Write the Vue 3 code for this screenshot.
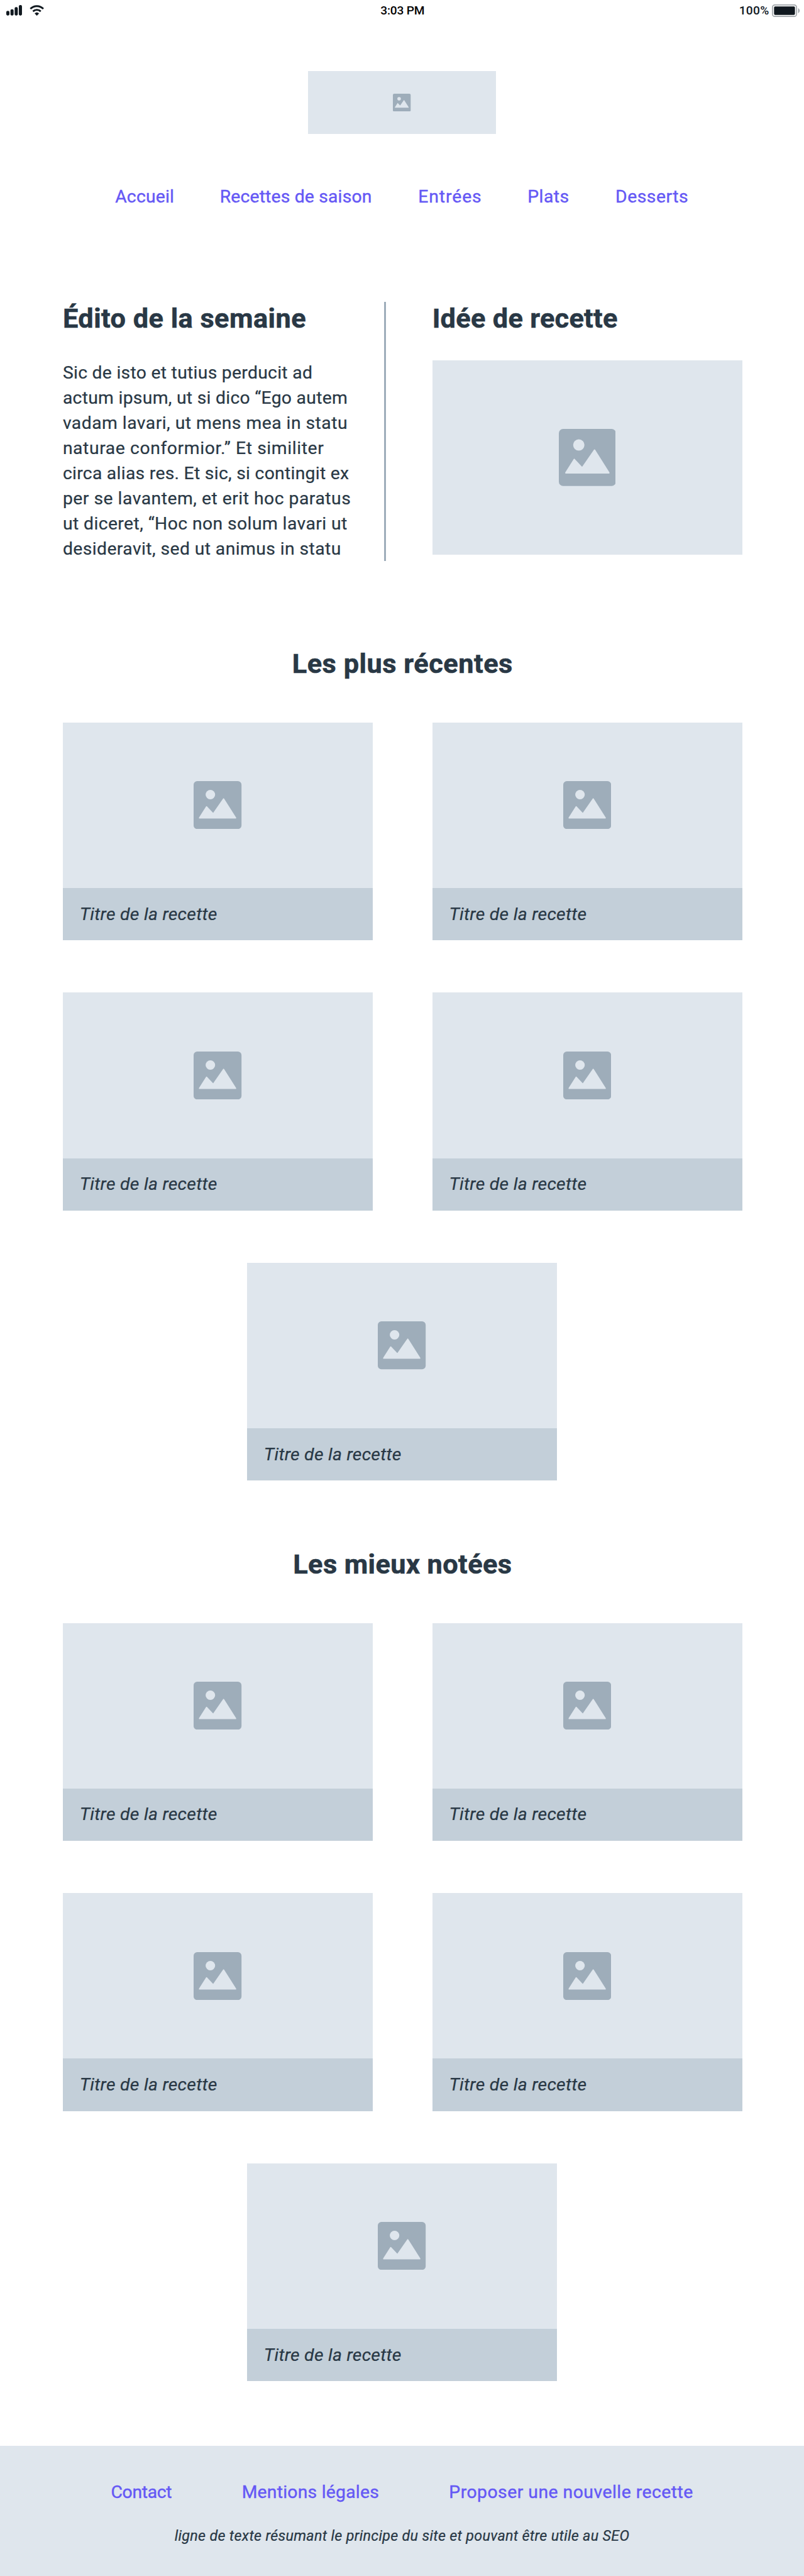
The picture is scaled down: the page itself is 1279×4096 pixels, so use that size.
<script setup>
import { h } from 'vue'

const navLinks = [
  { label: 'Accueil', cls: 'accueil' },
  { label: 'Recettes de saison', cls: 'saison' },
  { label: 'Entrées', cls: 'entrees' },
  { label: 'Plats', cls: 'plats' },
  { label: 'Desserts', cls: 'desserts' },
]

const editoLines = [
  'Sic de isto et tutius perducit ad',
  'actum ipsum, ut si dico “Ego autem',
  'vadam lavari, ut mens mea in statu',
  'naturae conformior.” Et similiter',
  'circa alias res. Et sic, si contingit ex',
  'per se lavantem, et erit hoc paratus',
  'ut diceret, “Hoc non solum lavari ut',
  'desideravit, sed ut animus in statu',
]

const sections = [
  { title: 'Les plus récentes', cls: 'recentes' },
  { title: 'Les mieux notées', cls: 'notees' },
]
const recipes = Array.from({ length: 5 }, () => 'Titre de la recette')

const footerLinks = [
  { label: 'Contact', cls: 'contact' },
  { label: 'Mentions légales', cls: 'mentions' },
  { label: 'Proposer une nouvelle recette', cls: 'proposer' },
]

const PictureIcon = () =>
  h('svg', { viewBox: '0 0 100 100', 'aria-hidden': 'true' }, [
    h('rect', { width: 100, height: 100, rx: 7.5, fill: '#9eadba' }),
    h('circle', { cx: 35, cy: 28.2, r: 9.9, fill: '#dfe6ed' }),
    h('path', {
      d: 'M11.2 76.2 26 52.8q1-1.2 2 0L40.8 66.4 61.6 36.4q1-1.2 2 0L88.8 76.2q.8 2-1 2H12.2q-1.8 0-1-2z',
      fill: '#dfe6ed',
    }),
  ])
</script>

<template>
  <div class="page">
    <header class="status">
      <div class="signal">
        <svg class="bars" viewBox="0 0 30 20">
          <rect x="0" y="11" width="6" height="9" rx="2.6" />
          <rect x="8" y="8" width="6" height="12" rx="2.6" />
          <rect x="16" y="4" width="6" height="16" rx="2.6" />
          <rect x="24" y="0" width="6" height="20" rx="2.6" />
        </svg>
        <svg class="wifi" viewBox="0 0 28 20">
          <path d="M1.6 7.2A17.6 17.6 0 0 1 26.4 7.2" />
          <path d="M6.6 12.2A10.6 10.6 0 0 1 21.4 12.2" />
          <path class="dot" d="M10.2 16.1a5.6 5.6 0 0 1 7.6 0L14 20z" />
        </svg>
      </div>
      <span class="time">3:03 PM</span>
      <div class="power">
        <span class="percent">100%</span>
        <svg class="battery" viewBox="0 0 54 24">
          <rect x="1" y="1" width="46" height="22" rx="4.5" fill="none" stroke="#a1a6aa" stroke-width="2" />
          <rect x="4" y="4" width="40" height="16" rx="2" fill="#10181f" />
          <path d="M50 7q3 2 3 5t-3 5z" fill="#a1a6aa" />
        </svg>
      </div>
    </header>

    <div class="logo"><PictureIcon class="icon-logo" /></div>

    <nav class="nav">
      <a v-for="l in navLinks" :key="l.label" :class="l.cls">{{ l.label }}</a>
    </nav>

    <section class="intro">
      <article class="edito">
        <h2 class="title-edito">Édito de la semaine</h2>
        <p><span v-for="line in editoLines" :key="line" class="line">{{ line }}</span></p>
      </article>
      <div class="divider"></div>
      <article class="idea">
        <h2 class="title-idea">Idée de recette</h2>
        <div class="idea-picture"><PictureIcon class="icon-idea" /></div>
      </article>
    </section>

    <section v-for="s in sections" :key="s.title" class="listing" :class="s.cls">
      <h2>{{ s.title }}</h2>
      <div class="cards">
        <article v-for="(r, i) in recipes" :key="i" class="card">
          <div class="picture"><PictureIcon class="icon-card" /></div>
          <div class="caption">{{ r }}</div>
        </article>
      </div>
    </section>

    <footer class="footer">
      <div class="footer-links">
        <a v-for="l in footerLinks" :key="l.label" :class="l.cls">{{ l.label }}</a>
      </div>
      <p class="tagline">ligne de texte résumant le principe du site et pouvant être utile au SEO</p>
    </footer>
  </div>
</template>

<style>
html {
  font-size: 8.3255px;
}
body {
  margin: 0;
  background: #fff;
}
</style>

<style scoped>
.page {
  display: flex;
  flex-direction: column;
  height: 4096px;
  overflow: hidden;
  background: #fff;
  color: #293845;
  font-family: Roboto, 'Liberation Sans', sans-serif;
  font-size: 3.4rem;
  line-height: 4.8rem;
  white-space: nowrap;
  -webkit-text-stroke: 0.03rem currentColor;
}
h2,
p {
  margin: 0;
}
svg {
  display: block;
}

.status {
  flex: none;
  display: grid;
  grid-template-columns: 1fr auto 1fr;
  align-items: center;
  height: 4rem;
  padding: 0 1rem 0 1.2rem;
  color: #10181f;
  font-size: 2.3rem;
  font-weight: 500;
  line-height: 4rem;
  -webkit-text-stroke: 0;
}
.signal {
  display: flex;
  gap: 1.5rem;
}
.bars {
  width: 3rem;
  height: 2rem;
  fill: #10181f;
}
.wifi {
  width: 2.8rem;
  height: 2rem;
  fill: none;
  stroke: #10181f;
  stroke-width: 3.5;
}
.wifi .dot {
  fill: #10181f;
  stroke-width: 0.8;
}
.time {
  color: #000;
  letter-spacing: -0.01em;
}
.power {
  display: flex;
  justify-content: flex-end;
  align-items: center;
  gap: 0.55rem;
}
.percent {
  letter-spacing: 0.017em;
}
.battery {
  width: 5.4rem;
  height: 2.4rem;
  margin-right: -0.3rem;
}

.logo {
  flex: none;
  display: flex;
  align-items: center;
  justify-content: center;
  width: 36rem;
  height: 12rem;
  margin: 9.6rem auto 0;
  background: #dfe6ed;
}
.icon-logo {
  width: 3.4rem;
  height: 3.4rem;
}

.nav {
  display: grid;
  grid-template-columns: 20rem 37.9rem 20.9rem 16.8rem auto;
  margin-top: 9.6rem;
  padding-left: 22rem;
}
a {
  color: #6558f5;
  -webkit-text-stroke-width: 0.05rem;
}
.accueil {
  letter-spacing: 0.008em;
}
.saison {
  letter-spacing: 0.0065em;
}
.entrees {
  letter-spacing: 0.033em;
}
.plats {
  letter-spacing: 0.017em;
}
.desserts {
  letter-spacing: 0.0182em;
}
.contact {
  letter-spacing: -0.011em;
}
.mentions {
  letter-spacing: 0.0085em;
}
.proposer {
  letter-spacing: 0.0175em;
}

h2 {
  font-size: 5.2rem;
  font-weight: 700;
  line-height: 6.4rem;
  -webkit-text-stroke-width: 0.07rem;
}
.intro {
  display: flex;
  height: 49.6rem;
  margin-top: 17.6rem;
  padding-left: 12rem;
}
.edito {
  width: 61.4rem;
}
.title-edito {
  letter-spacing: 0.0108em;
}
.title-idea {
  letter-spacing: 0.0071em;
}
.edito p {
  margin-top: 4.8rem;
}
.line {
  display: block;
  letter-spacing: 0.0102em;
}
.line:nth-child(3) {
  letter-spacing: 0.0168em;
}
.line:nth-child(4) {
  letter-spacing: 0.0213em;
}
.line:nth-child(6) {
  letter-spacing: 0.0179em;
}
.line:nth-child(7),
.line:nth-child(8) {
  letter-spacing: 0.0149em;
}
.divider {
  width: 0.4rem;
  background: #9eadba;
}
.idea {
  margin-left: 8.8rem;
}
.idea-picture {
  display: flex;
  align-items: center;
  justify-content: center;
  width: 59.2rem;
  height: 37.2rem;
  margin-top: 4.8rem;
  background: #dfe6ed;
}
.icon-idea {
  width: 10.9rem;
  height: 10.9rem;
}

.listing {
  margin-top: 12.8rem;
}
.listing.recentes {
  margin-top: 16.4rem;
}
.listing h2 {
  padding-left: 0.2rem;
  text-align: center;
}
.recentes h2 {
  letter-spacing: 0.0123em;
}
.notees h2 {
  letter-spacing: 0.0097em;
}
.cards {
  display: flex;
  flex-wrap: wrap;
  justify-content: center;
  gap: 10rem 11.4rem;
  margin-top: 8rem;
  padding: 0 10.9rem 0 11.1rem;
}
.card {
  width: 59.2rem;
}
.card:last-child {
  margin-right: 0.2rem;
}
.picture {
  display: flex;
  align-items: center;
  justify-content: center;
  height: 31.6rem;
  background: #dfe6ed;
}
.icon-card {
  width: 9.15rem;
  height: 9.15rem;
}
.caption {
  height: 4.8rem;
  padding: 2.6rem 3.2rem;
  background: #c3cfd9;
  font-style: italic;
  letter-spacing: 0.0108em;
}

.footer {
  flex: 1;
  margin-top: 12.4rem;
  padding-top: 6.4rem;
  background: #dfe6ed;
}
.footer-links {
  display: grid;
  grid-template-columns: 25rem 39.6rem auto;
  padding-left: 21.2rem;
}
.tagline {
  margin-top: 4rem;
  font-size: 2.8rem;
  font-style: italic;
  line-height: 4rem;
  letter-spacing: 0.0136em;
  text-align: center;
}
</style>
